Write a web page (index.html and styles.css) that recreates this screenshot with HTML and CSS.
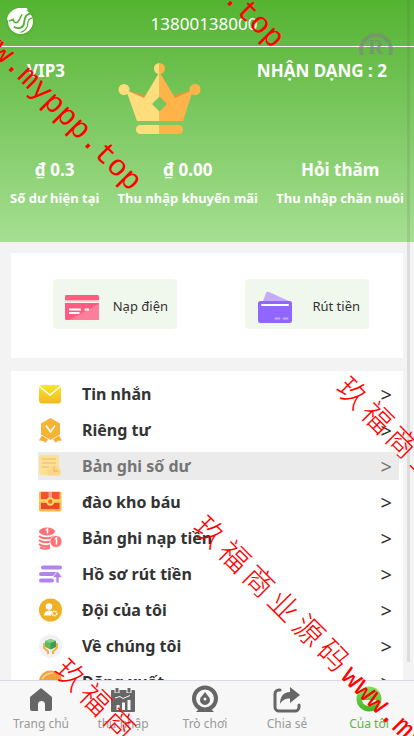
FILE: index.html
```html
<!DOCTYPE html>
<html lang="vi">
<head>
  <meta charset="UTF-8" />
  <meta name="viewport" content="width=device-width, initial-scale=1.0"/>
  <title>Của tôi</title>
  <link rel="stylesheet" href="styles.css">
</head>
<body>
  <div class="app">
    <main class="content">
      <header class="hero">
        <div class="top-bar">
          <svg class="logo" viewBox="0 0 28 28" aria-hidden="true">
            <circle cx="14" cy="14" r="14" fill="#4fae2d" opacity=".5"/>
            <circle cx="14" cy="14" r="12" fill="#fff"/>
            <path d="M27 6C19 6 18 10 17.500 15c-.5 5-5 7-10 4" fill="none" stroke="#55b035" stroke-width="1.800"/>
            <path d="M25.500 10.500c-4 .5-4.500 3-4.500 6-.5 4-3 7-7 8" fill="none" stroke="#55b035" stroke-width="1.200"/>
            <path d="M1 13l5-2.500 3 1c-.5 3 2 4 3.500 1.500L15 8c1-2 3-4 6-5l-1-2-8 0C7 2 1 6 1 13z" fill="#fff"/>
            <path d="M3 13.500l4-1.500c.5 4 4 4 5.500 1l3-6" fill="none" stroke="#55b035" stroke-width="1.500"/>
          </svg>
          <span class="phone">13800138000</span>
        </div>

        <div class="profile">
          <strong class="vip">VIP3</strong>
          <svg class="crown" viewBox="118 62 84 74" aria-hidden="true">
            <path d="M126 90l23 6-5 6zM193 90l-23 6 5 6z" fill="#db9a3c"/>
            <path d="M159.500 72L144 98l-18-8 11 31h22.500v-9.500l-7.500-7.500 7.500-7.500z" fill="#ffdd7c"/>
            <path d="M159.500 72L175 98l18-8-10 31h-23.500v-9.500l7.500-7.500-7.500-7.500z" fill="#ffb349"/>
            <circle cx="124" cy="89.500" r="5.500" fill="#ffdd7c"/>
            <circle cx="195" cy="89.500" r="5.500" fill="#ffb349"/>
            <path d="M159.500 63a5.500 5.500 0 0 0 0 11z" fill="#ffdd7c"/>
            <path d="M159.500 63a5.500 5.500 0 0 1 0 11z" fill="#ffb349"/>
            <path d="M159.500 125h-19a4.500 4.500 0 0 0 0 9h19z" fill="#ffdd7c"/>
            <path d="M159.500 125h19a4.500 4.500 0 0 1 0 9h-19z" fill="#ffb349"/>
          </svg>
          <strong class="user-id">NHẬN DẠNG : 2</strong>
        </div>

        <div class="stats">
          <div class="stat"><b>₫ 0.3</b><span>Số dư hiện tại</span></div>
          <div class="stat"><b>₫ 0.00</b><span>Thu nhập khuyến mãi</span></div>
          <div class="stat"><b>Hỏi thăm</b><span>Thu nhập chăn nuôi</span></div>
        </div>
      </header>

      <section class="panel actions">
        <button class="action" type="button">
          <svg viewBox="0 0 36 36" aria-hidden="true">
            <path d="M1 12V8.500A1.500 1.500 0 0 1 2.500 7h31A1.500 1.500 0 0 1 35 8.500V12z" fill="#ff5c7f"/>
            <path d="M1 12h34v1.500H1z" fill="#ffb9c8"/>
            <path d="M1 15h34v15.500a1.500 1.500 0 0 1-1.500 1.500h-31A1.500 1.500 0 0 1 1 30.500z" fill="#ff5c7f"/>
            <path d="M35 16v14.500a1.500 1.500 0 0 1-1.500 1.500H5z" fill="#ff7f9a"/>
            <path d="M5 21.500h12M20.500 21.500H25M5 25h10.500" stroke="#fff" stroke-width="2"/>
          </svg>
          <span>Nạp điện</span>
        </button>
        <button class="action" type="button">
          <svg viewBox="0 0 36 36" aria-hidden="true">
            <path d="M7 13l3-8q1-2 3-1l20 9z" fill="#c4abff"/>
            <rect x="2" y="13" width="34" height="22" rx="2.500" fill="#8f66ff"/>
            <path d="M6 17h26" stroke="#fff" stroke-width="2.200" stroke-linecap="round"/>
            <path d="M19.500 30.500h4M27.500 30.500h4" stroke="#c4abff" stroke-width="2" stroke-linecap="round"/>
          </svg>
          <span>Rút tiền</span>
        </button>
      </section>

      <nav class="panel menu">
        <a class="row" href="#messages">
          <svg viewBox="0 0 24 24" aria-hidden="true">
            <defs><linearGradient id="mail" x2="0" y2="1"><stop stop-color="#fae52e"/><stop offset="1" stop-color="#efba20"/></linearGradient></defs>
            <rect x="1" y="3" width="22" height="18.500" rx="3" fill="url(#mail)"/>
            <path d="M1.500 4.500L12 13 22.500 4.500" fill="none" stroke="#fff" stroke-width="1.500"/>
          </svg>
          <span>Tin nhắn</span><i>&gt;</i>
        </a>
        <a class="row" href="#private">
          <svg viewBox="0 0 24 24" aria-hidden="true">
            <path d="M12.500 0L22 5.500v11L12.500 22 3 16.500v-11z" fill="#f6b437"/>
            <path d="M8 7.500l4.500 6.500L17 7.500" fill="none" stroke="#fff" stroke-width="1.500"/>
            <path d="M4 17.500l6 4L7 25l-1.500-2L1 22.500zM21 17.500l-6 4 3 3.500 1.500-2 4.500-.5z" fill="#f6ad32"/>
          </svg>
          <span>Riêng tư</span><i>&gt;</i>
        </a>
        <a class="row pressed" href="#balance">
          <svg viewBox="0 0 24 24" aria-hidden="true">
            <path d="M4 1h14a3 3 0 0 1 3 3v17.500H4a3 3 0 0 1-3-3V4a3 3 0 0 1 3-3z" fill="#ffdf82"/>
            <path d="M4 5h14M4 9h14M4 13h7" stroke="#f6bd5b" stroke-width="1.300"/>
            <path d="M8 21.500H12a5 4 0 0 1-1-7 6 6 0 0 1 10 0 4 4 0 0 1 0 7z" fill="#ffd36e"/>
            <path d="M16 12.500V17h4" fill="none" stroke="#f6ad42" stroke-width="1.300"/>
          </svg>
          <span>Bản ghi số dư</span><i>&gt;</i>
        </a>
        <a class="row" href="#treasure">
          <svg viewBox="0 0 24 24" aria-hidden="true">
            <rect x="1" y="1.500" width="22.500" height="20" rx="1.500" fill="#fab84a"/>
            <path d="M3 2h18.500v7H3z" fill="#f45136"/>
            <path d="M3 13h18.500v6H3z" fill="#ea482d"/>
            <path d="M1 10.500h22.500" stroke="#ffd75f" stroke-width="2"/>
            <path d="M10.500 2h3.500v6h-3.500z" fill="#ff9c87"/>
            <circle cx="12.300" cy="11.500" r="3.200" fill="#e77425" stroke="#ffd75f" stroke-width="2"/>
          </svg>
          <span>đào kho báu</span><i>&gt;</i>
        </a>
        <a class="row" href="#deposits">
          <svg viewBox="0 0 24 24" aria-hidden="true">
            <ellipse cx="9" cy="5.500" rx="8" ry="4" fill="#fb7375"/>
            <path d="M1 10c3 3 12 3 15 0M1 14c3 2.500 8 2.500 11 1.500M1 18c3 2.500 8 2.500 11 1.500M2 21.500c3 1.500 7 1.500 10 0" fill="none" stroke="#fb7375" stroke-width="2"/>
            <circle cx="18" cy="15.500" r="6" fill="#fb7375" stroke="#fff" stroke-width=".7"/>
            <path d="M8 4l1.500-1v4.500M17 13l1.500-1v6.500" fill="none" stroke="#fff" stroke-width="1.500"/>
          </svg>
          <span>Bản ghi nạp tiền</span><i>&gt;</i>
        </a>
        <a class="row" href="#withdrawals">
          <svg viewBox="0 0 24 24" aria-hidden="true">
            <path d="M5 5.500h17M3 12h15M3 18.500h11" stroke="#b283ec" stroke-width="4" stroke-linecap="round"/>
            <path d="M19.500 9l5 6.500h-3.500V21h-3v-5.500h-3.500z" fill="#b283ec" stroke="#fff" stroke-width=".7"/>
          </svg>
          <span>Hồ sơ rút tiền</span><i>&gt;</i>
        </a>
        <a class="row" href="#team">
          <svg viewBox="0 0 24 24" aria-hidden="true">
            <circle cx="12.500" cy="12" r="11.500" fill="#efb022"/>
            <circle cx="11" cy="8.500" r="3.300" fill="#fff"/>
            <path d="M6 17.500c0-6 9-6 10-3l-3 3z" fill="#fff"/>
            <circle cx="16.500" cy="15.500" r="3" fill="#efb022"/>
            <circle cx="16.500" cy="15.500" r="2.300" fill="none" stroke="#fff" stroke-width="1.500" stroke-dasharray="1.500 .6"/>
          </svg>
          <span>Đội của tôi</span><i>&gt;</i>
        </a>
        <a class="row" href="#about">
          <svg viewBox="0 0 24 24" aria-hidden="true">
            <circle cx="12.500" cy="12" r="11.500" fill="#f0f1f5"/>
            <path d="M12.500 5l5.500 2v6l-5.500 2.500L7 13V7z" fill="#5fba62"/>
            <path d="M7 7l5.500-2L18 7l-5.500 2z" fill="#8bd08a"/>
            <path d="M12.500 9L18 7v6l-5.500 2.500z" fill="#419c4a"/>
            <path d="M6 9v5l4 3.500V20M19 9v5l-4 3.500V20" fill="none" stroke="#f5b04c" stroke-width="2"/>
          </svg>
          <span>Về chúng tôi</span><i>&gt;</i>
        </a>
        <a class="row" href="#logout">
          <svg viewBox="0 0 24 24" aria-hidden="true">
            <circle cx="12.500" cy="12" r="11.500" fill="#f3a13c"/>
            <path d="M4 9c3-5 7-6 11-6" fill="none" stroke="#ffd49b" stroke-width="1.500"/>
          </svg>
          <span>Đăng xuất</span><i>&gt;</i>
        </a>
      </nav>
    </main>

    <nav class="tab-bar">
      <a class="tab" href="#home">
        <svg viewBox="0 0 28 28" aria-hidden="true">
          <path d="M14 3l11 9v12a2 2 0 0 1-2 2h-5v-6.500a3.500 3.500 0 0 0-7 0V26H5a2 2 0 0 1-2-2V12z" fill="#666"/>
        </svg>
        <span>Trang chủ</span>
      </a>
      <a class="tab" href="#income">
        <svg viewBox="0 0 28 28" aria-hidden="true">
          <path d="M3 5h22a1 1 0 0 1 1 1v20a1 1 0 0 1-1 1H3a1 1 0 0 1-1-1V6a1 1 0 0 1 1-1z" fill="#666"/>
          <path d="M8 3v5M20 3v5" stroke="#f7f7f7" stroke-width="5"/>
          <path d="M8 3v4.500M20 3v4.500" stroke="#666" stroke-width="3"/>
          <path d="M6 13l5-1.500 3 2 7-3" fill="none" stroke="#f7f7f7"/>
          <path d="M9 25v-5M14.500 25v-7.500M20 25V15" stroke="#f7f7f7" stroke-width="3"/>
        </svg>
        <span>thu nhập</span>
      </a>
      <a class="tab" href="#games">
        <svg viewBox="0 0 28 28" aria-hidden="true">
          <circle cx="14" cy="13.500" r="11" fill="none" stroke="#666" stroke-width="4"/>
          <path d="M14 7l3 4a5 5 0 1 1-6 0z" fill="#666"/>
          <circle cx="14" cy="14" r="1.500" fill="#f7f7f7"/>
          <path d="M5 27l4-4h10l4 4z" fill="#666"/>
        </svg>
        <span>Trò chơi</span>
      </a>
      <a class="tab" href="#share">
        <svg viewBox="0 0 28 28" aria-hidden="true">
          <path d="M7 5H6a4 4 0 0 0-4 4v13a4 4 0 0 0 4 4h16a4 4 0 0 0 4-4v-2" fill="none" stroke="#666" stroke-width="3" stroke-linecap="round"/>
          <path d="M17 2l10 8-10 8v-4.500c-5 0-8 2-10 5.500 0-7 3-12 10-12z" fill="#666"/>
        </svg>
        <span>Chia sẻ</span>
      </a>
      <a class="tab active" href="#mine">
        <svg viewBox="0 0 28 28" aria-hidden="true">
          <defs><linearGradient id="smile" x2="0" y2="1"><stop stop-color="#78e55b"/><stop offset="1" stop-color="#45b420"/></linearGradient></defs>
          <circle cx="14" cy="14" r="12.500" fill="url(#smile)"/>
          <path d="M7 15h14a7 6 0 0 1-14 0z" fill="#fff"/>
        </svg>
        <span>Của tôi</span>
      </a>
    </nav>

    <div class="overlay" aria-hidden="true">
      <div class="scroll-thumb"></div>
      <svg class="registered" viewBox="0 0 36 23">
        <circle cx="18" cy="18" r="15" fill="none" stroke="#7d8b78" stroke-width="4"/>
        <text x="18" y="22" text-anchor="middle">R</text>
      </svg>
      <div class="watermark mark-left">www.myppp.top</div>
      <div class="watermark mark-top">.top</div>
      <div class="watermark mark-right"><span>玖</span><span>福</span><span>商</span><span>业</span></div>
      <div class="watermark mark-center"><span>玖</span><span>福</span><span>商</span><span>业</span><span>源</span><span>码</span><span>www.my</span></div>
      <div class="watermark mark-bottom"><span>玖</span><span>福</span><span>商</span></div>
    </div>
  </div>
</body>
</html>
```
FILE: styles.css
```css
* {
  box-sizing: border-box;
}

body {
  margin: 0;
  font-family: "Noto Sans", "Open Sans", sans-serif;
  background-color: #f3f3f3;
  color: #333;
}

a {
  color: inherit;
  text-decoration: none;
}

.app {
  position: relative;
  display: flex;
  flex-direction: column;
  height: 100vh;
  overflow: hidden;
}

.content {
  flex: 1;
  min-height: 0;
  overflow: hidden;
}

/* green header */
.hero {
  height: 242px;
  background: linear-gradient(#54b331, #a6df93);
  color: #fff;
}

.top-bar {
  display: grid;
  grid-template-columns: 36px 1fr 48px;
  align-items: center;
  height: 47px;
  padding-left: 6px;
  border-bottom: 1px solid #fff;
}

.logo {
  width: 29px;
  height: 29px;
  margin-bottom: 4px;
}

.phone {
  text-align: center;
  font-size: 17px;
}

.profile {
  display: grid;
  grid-template-columns: 91px 84px 1fr;
  padding: 15px 27px 0;
  font-size: 17px;
  line-height: 18px;
}

.crown {
  width: 84px;
  height: 74px;
}

.user-id {
  text-align: right;
}

.stats {
  display: flex;
  justify-content: space-between;
  padding: 22px 10px 0;
}

.stat {
  display: flex;
  flex-direction: column;
  gap: 4px;
  text-align: center;
  white-space: nowrap;
}

.stat b {
  font-size: 17px;
  line-height: 24px;
}

.stat span {
  font-size: 13px;
  font-weight: bold;
  line-height: 24px;
}

/* white blocks */
.panel {
  margin: 11px 11px 0;
  background-color: #fff;
}

.actions {
  display: flex;
  justify-content: space-between;
  padding: 26px 34px 29px 42px;
}

.action {
  display: flex;
  align-items: center;
  justify-content: space-between;
  width: 124px;
  height: 50px;
  padding: 4px 9px 0 11px;
  border: none;
  border-radius: 4px;
  background-color: #f0f8ee;
  color: #333;
  font-family: inherit;
  font-size: 13px;
  cursor: pointer;
}

.action svg {
  width: 36px;
  height: 36px;
}

.menu {
  display: flex;
  flex-direction: column;
  gap: 8px;
  margin-top: 13px;
  padding: 9px 4px 9px 27px;
}

.row {
  display: flex;
  align-items: center;
  height: 28px;
  padding-right: 7px;
  font-size: 16px;
  font-weight: bold;
}

.row svg {
  width: 24px;
  height: 24px;
  margin-right: 20px;
  overflow: visible;
}

.row i {
  margin-left: auto;
  font-size: 20px;
  font-style: normal;
  font-weight: normal;
}

.pressed {
  background-color: #ebebeb;
  color: #757575;
}

.pressed svg {
  opacity: 0.8;
}

/* bottom tabs */
.tab-bar {
  display: flex;
  height: 56px;
  padding-right: 4px;
  border-top: 1px solid #d9dbe5;
  background-color: #f7f7f7;
}

.tab {
  flex: 1;
  display: flex;
  flex-direction: column;
  align-items: center;
  padding-top: 4px;
  color: #999;
  font-size: 12px;
  line-height: 22px;
}

.tab svg {
  width: 28px;
  height: 28px;
}

.active {
  color: #5bb53a;
}

/* marks drawn over the whole page */
.overlay {
  position: absolute;
  inset: 0;
  overflow: hidden;
  pointer-events: none;
}

.scroll-thumb {
  position: absolute;
  top: 0;
  right: 4px;
  bottom: 74px;
  width: 3px;
  border-radius: 0 0 2px 2px;
  background-color: rgba(100, 100, 100, 0.16);
}

.registered {
  position: absolute;
  top: 32px;
  left: 358px;
  width: 36px;
  height: 23px;
  opacity: 0.7;
}

.registered text {
  fill: #7d8b78;
  font-family: "Liberation Serif", serif;
  font-size: 22px;
  font-weight: bold;
}

.watermark {
  position: absolute;
  display: flex;
  align-items: center;
  gap: 5px;
  height: 36px;
  color: #f00;
  font-family: "Liberation Mono", "Noto Sans CJK SC", monospace;
  font-size: 30px;
  font-weight: 300;
  line-height: 36px;
  white-space: nowrap;
  transform: rotate(45deg);
  transform-origin: 0 50%;
}

.mark-left {
  top: 3px;
  left: -29px;
}

.mark-top {
  top: -25px;
  left: 228px;
}

.mark-right {
  top: 366px;
  left: 340px;
}

.mark-center {
  top: 505px;
  left: 197px;
}

.mark-bottom {
  top: 648px;
  left: 58px;
}
```
